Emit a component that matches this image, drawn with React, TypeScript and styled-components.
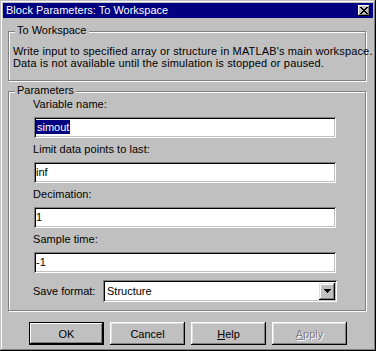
import React from 'react';
import styled, { createGlobalStyle, css } from 'styled-components';

const GlobalStyle = createGlobalStyle`
  html, body { margin: 0; padding: 0; background: #c0c0c0; }
  body { font-family: "Liberation Sans", Arial, sans-serif; font-size: 11px; color: #000; }
`;

const Window = styled.div`
  width: 376px;
  height: 351px;
  box-sizing: border-box;
  background: #c0c0c0;
  padding: 3px;
  box-shadow: inset -1px -1px #000, inset 1px 1px #c0c0c0, inset -2px -2px #808080, inset 2px 2px #fff;
  display: flex;
  flex-direction: column;
`;

const TitleBar = styled.div`
  height: 15px;
  background: #000080;
  color: #fff;
  display: flex;
  align-items: center;
  justify-content: space-between;
  padding: 0 3px 0 3px;
`;

const TitleText = styled.span`
  line-height: 15px;
  white-space: nowrap;
`;

const CloseButton = styled.div`
  width: 12px;
  height: 11px;
  box-sizing: border-box;
  background: #c0c0c0;
  box-shadow: inset -1px -1px #000, inset 1px 1px #fff, inset -2px -2px #808080;
  display: flex;
  align-items: center;
  justify-content: center;
`;

const Body = styled.div`
  flex: 1;
  display: flex;
  flex-direction: column;
  padding: 13px 7px 0 5px;
`;

const GroupBox = styled.div<{ $height: number }>`
  position: relative;
  box-sizing: border-box;
  height: ${p => p.$height}px;
  border: 1px solid #808080;
  box-shadow: inset 1px 1px #fff, 1px 1px #fff;
`;

const Legend = styled.span`
  position: absolute;
  top: -8px;
  left: 6px;
  padding: 0 2px;
  background: #c0c0c0;
  line-height: 13px;
  white-space: nowrap;
`;

const Description = styled.div`
  padding: 13px 4px 0 4px;
  line-height: 12px;
  letter-spacing: 0.15px;
  white-space: nowrap;
`;

const ParamsBox = styled(GroupBox)`
  margin-top: 10px;
  padding: 6px 0 0 24px;
  display: flex;
  flex-direction: column;
`;

const Field = styled.div`
  display: flex;
  flex-direction: column;
  margin-bottom: 5px;
`;

const Label = styled.div`
  line-height: 13px;
  height: 13px;
  margin-bottom: 6px;
  letter-spacing: 0.05px;
  white-space: nowrap;
`;

const sunken = css`
  box-sizing: border-box;
  background: #fff;
  box-shadow: inset 1px 1px #808080, inset -1px -1px #fff, inset 2px 2px #000, inset -2px -2px #c0c0c0;
`;

const TextField = styled.div`
  ${sunken};
  margin-left: 1px;
  width: 302px;
  height: 21px;
  padding: 3px 2px 0 2px;
  line-height: 14px;
  white-space: nowrap;
`;

const Selected = styled.span`
  background: #000080;
  color: #fff;
  padding: 0 1px 0 1px;
  display: inline-block;
  line-height: 14px;
`;

const FormatRow = styled.div`
  display: flex;
  align-items: center;
  margin-top: 2px;
`;

const FormatLabel = styled.span`
  width: 70px;
  white-space: nowrap;
`;

const Combo = styled.div`
  ${sunken};
  width: 234px;
  height: 22px;
  display: flex;
  align-items: center;
  justify-content: space-between;
  padding: 2px 2px 2px 4px;
`;

const DropButton = styled.div`
  width: 16px;
  height: 17px;
  box-sizing: border-box;
  background: #c0c0c0;
  box-shadow: inset -1px -1px #000, inset 1px 1px #dfdfdf, inset -2px -2px #808080, inset 2px 2px #fff;
  display: flex;
  align-items: center;
  justify-content: center;
`;

const ButtonRow = styled.div`
  display: flex;
  gap: 6px;
  margin-top: 11px;
  padding-left: 21px;
`;

const Button = styled.div<{ $default?: boolean; $disabled?: boolean }>`
  width: 75px;
  height: 23px;
  box-sizing: border-box;
  background: #c0c0c0;
  display: flex;
  align-items: center;
  justify-content: center;
  box-shadow: inset -1px -1px #000, inset 1px 1px #fff, inset -2px -2px #808080, inset 2px 2px #dfdfdf;
  ${p => p.$default && css`
    box-shadow: inset 0 0 0 1px #000, inset -2px -2px #000, inset 2px 2px #fff, inset -3px -3px #808080;
  `}
  ${p => p.$disabled && css`
    color: #808080;
    text-shadow: 1px 1px 0 #fff;
  `}
`;

const U = styled.span`
  text-decoration: underline;
`;

export default function App() {
  return (
    <>
      <GlobalStyle />
      <Window>
        <TitleBar>
          <TitleText>Block Parameters: To Workspace</TitleText>
          <CloseButton>
            <svg width="8" height="7" viewBox="0 0 8 7" shapeRendering="crispEdges">
              <path d="M0 0h2v1h-2zM6 0h2v1h-2zM1 1h2v1h-2zM5 1h2v1h-2zM2 2h4v1h-4zM3 3h2v1h-2zM2 4h4v1h-4zM1 5h2v1h-2zM5 5h2v1h-2zM0 6h2v1h-2zM6 6h2v1h-2z" fill="#000" />
            </svg>
          </CloseButton>
        </TitleBar>
        <Body>
          <GroupBox $height={50}>
            <Legend>To Workspace</Legend>
            <Description>
              Write input to specified array or structure in MATLAB's main workspace.
              <br />
              Data is not available until the simulation is stopped or paused.
            </Description>
          </GroupBox>
          <ParamsBox $height={220}>
            <Legend>Parameters</Legend>
            <Field>
              <Label>Variable name:</Label>
              <TextField><Selected>simout</Selected></TextField>
            </Field>
            <Field>
              <Label>Limit data points to last:</Label>
              <TextField>inf</TextField>
            </Field>
            <Field>
              <Label>Decimation:</Label>
              <TextField>1</TextField>
            </Field>
            <Field>
              <Label>Sample time:</Label>
              <TextField>-1</TextField>
            </Field>
            <FormatRow>
              <FormatLabel>Save format:</FormatLabel>
              <Combo>
                <span>Structure</span>
                <DropButton>
                  <svg width="7" height="4" viewBox="0 0 7 4" shapeRendering="crispEdges">
                    <path d="M0 0h7v1h-7zM1 1h5v1h-5zM2 2h3v1h-3zM3 3h1v1h-1z" fill="#000" />
                  </svg>
                </DropButton>
              </Combo>
            </FormatRow>
          </ParamsBox>
          <ButtonRow>
            <Button $default>OK</Button>
            <Button>Cancel</Button>
            <Button><span><U>H</U>elp</span></Button>
            <Button $disabled><span><U>A</U>pply</span></Button>
          </ButtonRow>
        </Body>
      </Window>
    </>
  );
}
